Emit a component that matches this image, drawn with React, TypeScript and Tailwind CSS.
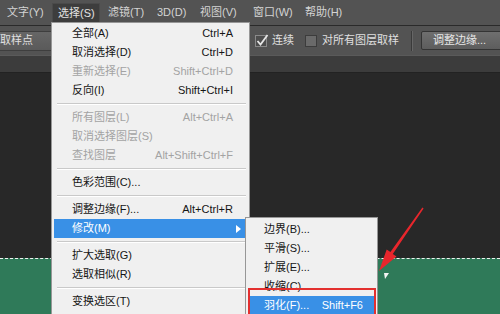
import React from 'react'

type MenuRow =
  | { kind: 'item'; label: string; keys?: string; disabled?: boolean; active?: boolean; sub?: boolean }
  | { kind: 'sep' }

const selectMenu: MenuRow[] = [
  { kind: 'item', label: '全部(A)', keys: 'Ctrl+A' },
  { kind: 'item', label: '取消选择(D)', keys: 'Ctrl+D' },
  { kind: 'item', label: '重新选择(E)', keys: 'Shift+Ctrl+D', disabled: true },
  { kind: 'item', label: '反向(I)', keys: 'Shift+Ctrl+I' },
  { kind: 'sep' },
  { kind: 'item', label: '所有图层(L)', keys: 'Alt+Ctrl+A', disabled: true },
  { kind: 'item', label: '取消选择图层(S)', disabled: true },
  { kind: 'item', label: '查找图层', keys: 'Alt+Shift+Ctrl+F', disabled: true },
  { kind: 'sep' },
  { kind: 'item', label: '色彩范围(C)...' },
  { kind: 'sep' },
  { kind: 'item', label: '调整边缘(F)...', keys: 'Alt+Ctrl+R' },
  { kind: 'item', label: '修改(M)', active: true, sub: true },
  { kind: 'sep' },
  { kind: 'item', label: '扩大选取(G)' },
  { kind: 'item', label: '选取相似(R)' },
  { kind: 'sep' },
  { kind: 'item', label: '变换选区(T)' },
]

const modifyMenu = [
  { label: '边界(B)...' },
  { label: '平滑(S)...' },
  { label: '扩展(E)...' },
  { label: '收缩(C)...' },
  { label: '羽化(F)...', keys: 'Shift+F6', active: true },
]

// top menu bar: [label, box width]
const topMenu: [string, string][] = [
  ['文字(Y)', 'w-[50px]'],
  ['选择(S)', 'w-[48px]'],
  ['滤镜(T)', 'w-[49px]'],
  ['3D(D)', 'w-[43px]'],
  ['视图(V)', 'w-[53px]'],
  ['窗口(W)', 'w-[52px]'],
  ['帮助(H)', 'w-[50px]'],
]

function MenuBar() {
  return (
    <div className="h-[26px] shrink-0 flex items-stretch pl-[2px] bg-[#535353] border-b border-[#2a2a2a]">
      {topMenu.map(([label, w], i) =>
        i === 1 ? (
          <div
            key={label}
            className={`${w} shrink-0 mr-[3px] mt-[3px] flex items-center pl-[5px] pb-[3px] text-[#e2e2e2] bg-[#3d3d3d] border border-b-0 border-[#4a4a4a]`}
          >
            {label}
          </div>
        ) : (
          <div key={label} className={`${w} shrink-0 flex items-center pl-[5px] text-[#d4d4d4] whitespace-nowrap`}>
            {label}
          </div>
        ),
      )}
    </div>
  )
}

function OptionsBar() {
  return (
    <div className="h-[29px] shrink-0 flex items-center bg-[#535353] text-[#e0e0e0] whitespace-nowrap">
      {/* sample size dropdown, clipped on the left */}
      <div className="w-[52px] h-[20px] shrink-0 flex items-center justify-end pr-[19px] overflow-hidden bg-gradient-to-b from-[#666] to-[#5a5a5a] border-y border-[#3e3e3e]">
        取样点
      </div>

      <div className="ml-[203px] w-[12px] h-[12px] shrink-0 relative bg-[#4d4d4d] border border-[#8a8a8a]">
        <svg className="absolute -top-[2px] left-0" width="13" height="13" viewBox="0 0 13 13">
          <path d="M1.5 7 L4.5 10.5 L11.5 1" stroke="#e6e6e6" strokeWidth="1.8" fill="none" />
        </svg>
      </div>
      <span className="ml-[5px] shrink-0">连续</span>

      <div className="ml-[11px] w-[12px] h-[12px] shrink-0 bg-[#6a6a6a] border border-[#3c3c3c]" />
      <span className="ml-[5px] shrink-0">对所有图层取样</span>

      <div className="ml-[12px] h-[20px] w-[2px] shrink-0 border-l border-[#3a3a3a] border-r border-r-[#666]" />

      <div className="ml-[8px] h-[19px] w-[90px] shrink-0 flex items-center pl-[11px] rounded-[2px] bg-gradient-to-b from-[#6f6f6f] to-[#5d5d5d] border border-[#343434] text-[#e8e8e8]">
        调整边缘...
      </div>
    </div>
  )
}

function SelectMenu() {
  return (
    <div className="absolute left-[51px] top-[22px] w-[199px] h-[300px] pt-[1px] bg-[#f0f0f0] border border-[#979797] text-[#151515]">
      {selectMenu.map((row, i) =>
        row.kind === 'sep' ? (
          <div key={i} className="h-[8px] pt-[3px] pl-[5px] pr-[3px]">
            <div className="h-[2px] border-t border-[#c9c9c9] border-b border-b-white" />
          </div>
        ) : (
          <div
            key={i}
            className={`h-[19px] mx-[2px] pl-[18px] pr-[14px] flex items-center justify-between whitespace-nowrap ${
              row.active ? 'bg-[#3990e6] text-white' : row.disabled ? 'text-[#a3a3a3]' : ''
            }`}
          >
            <span>{row.label}</span>
            {row.keys && <span>{row.keys}</span>}
            {row.sub && (
              <svg className="-mr-[8px]" width="5" height="8" viewBox="0 0 5 8">
                <path d="M0 0 L5 4 L0 8 Z" fill="#ffffff" />
              </svg>
            )}
          </div>
        ),
      )}
    </div>
  )
}

function ModifyMenu() {
  return (
    <div className="absolute left-[245px] top-[217px] w-[133px] h-[110px] pt-[2px] bg-[#f0f0f0] border border-[#979797] text-[#151515]">
      {modifyMenu.map((row) => (
        <div
          key={row.label}
          className={`h-[19px] mx-[2px] pl-[16px] pr-[12px] flex items-center justify-between whitespace-nowrap ${
            row.active ? 'bg-[#3990e6] text-white' : ''
          }`}
        >
          <span>{row.label}</span>
          {row.keys && <span>{row.keys}</span>}
        </div>
      ))}
    </div>
  )
}

export default function App() {
  return (
    <div className="relative w-[500px] h-[314px] overflow-hidden flex flex-col bg-[#282828] font-['Liberation_Sans','Noto_Sans_CJK_SC',sans-serif] text-[11px] leading-none">
      <MenuBar />
      <OptionsBar />

      {/* document tab strip */}
      <div className="h-[18px] shrink-0 bg-[#3c3c3c] border-t border-[#5a5a5a] border-b border-b-[#222]" />

      {/* canvas */}
      <div className="h-[185px] shrink-0 bg-[#282828]" />
      <div className="flex-1 bg-[#2f7a59] border-t border-dashed border-[#f2f2f2]" />

      <SelectMenu />
      <ModifyMenu />

      {/* red highlight frame around 羽化 */}
      <div className="absolute left-[248px] top-[288px] w-[128px] h-[30px] border-[2px] border-[#e3302f]" />

      {/* red arrow */}
      <svg className="absolute left-[360px] top-[195px]" width="80" height="90" viewBox="0 0 80 90">
        <polygon
          points="19,76 36.5,61.4 32.8,58.9 63.6,13.4 62.4,12.6 30.4,57.1 26.7,54.6"
          fill="#e8262c"
        />
      </svg>

      {/* little white mark on the canvas */}
      <svg className="absolute left-[384px] top-[273px]" width="5" height="6" viewBox="0 0 5 6">
        <path d="M0 0 L5 0 L1 6 Z" fill="#f4f4f4" />
      </svg>
    </div>
  )
}
